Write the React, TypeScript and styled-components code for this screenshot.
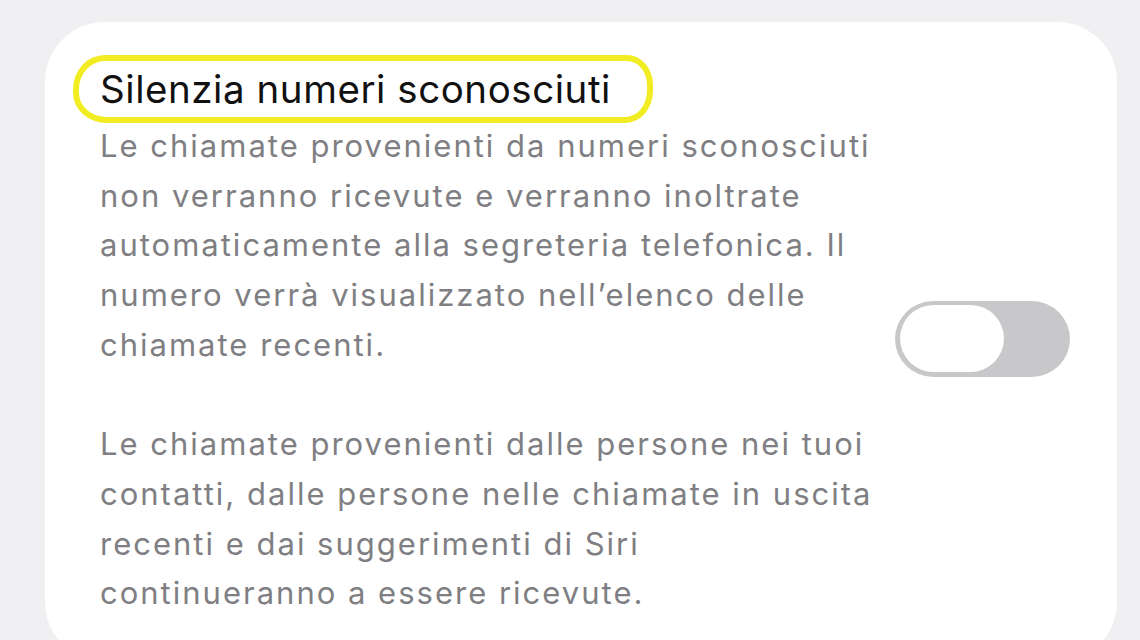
import styled, { createGlobalStyle } from "styled-components";

const GlobalStyle = createGlobalStyle`
  html, body {
    margin: 0;
    padding: 0;
    width: 1140px;
    height: 640px;
    overflow: hidden;
    background-color: #f0f0f2;
  }
`;

const StPage = styled.div`
  box-sizing: border-box;
  width: 1140px;
  height: 640px;
  padding: 22px 23px 0 45px;
  font-family: Inter, "Liberation Sans", sans-serif;
`;

const StCard = styled.div`
  box-sizing: border-box;
  display: flex;
  align-items: center;
  gap: 20px;
  width: 1072px;
  height: 640px;
  padding: 45px 47px 20px 55px;
  background-color: #ffffff;
  border-radius: 60px;
`;

const StTextColumn = styled.div`
  flex: 1;
  display: flex;
  flex-direction: column;
  align-self: flex-start;
`;

const StTitleRow = styled.div`
  display: flex;
`;

const StTitle = styled.h2`
  position: relative;
  margin: 0;
  font-size: 38.5px;
  font-weight: 400;
  line-height: 44px;
  letter-spacing: 0.55px;
  color: #111111;

  /* hand-drawn yellow highlight around the title */
  &::after {
    content: "";
    position: absolute;
    left: -27px;
    right: -42px;
    top: -12px;
    bottom: -12px;
    border: 6px solid #f2ec22;
    border-radius: 32px 26px 28px 34px / 34px 30px 32px 30px;
  }
`;

const StDescription = styled.p<{ $gap?: number }>`
  margin: ${({ $gap }) => $gap ?? 0}px 0 0;
  font-size: 31px;
  line-height: 49.7px;
  letter-spacing: 2px;
  color: #7f7f83;
  white-space: nowrap;
`;

const StToggle = styled.div<{ $on: boolean }>`
  flex-shrink: 0;
  box-sizing: border-box;
  display: flex;
  justify-content: ${({ $on }) => ($on ? "flex-end" : "flex-start")};
  align-items: center;
  width: 175px;
  height: 76px;
  margin-bottom: 32px;
  padding: 0 5px;
  border-radius: 38px;
  background-color: ${({ $on }) => ($on ? "#34c759" : "#c8c8ca")};
`;

const StKnob = styled.div`
  width: 104px;
  height: 67px;
  border-radius: 34px;
  background-color: #ffffff;
`;

const App = () => {
  return (
    <>
      <GlobalStyle />
      <StPage>
        <StCard>
          <StTextColumn>
            <StTitleRow>
              <StTitle>Silenzia numeri sconosciuti</StTitle>
            </StTitleRow>
            <StDescription $gap={10}>
              Le chiamate provenienti da numeri sconosciuti
              <br />
              non verranno ricevute e verranno inoltrate
              <br />
              automaticamente alla segreteria telefonica. Il
              <br />
              numero verrà visualizzato nell’elenco delle
              <br />
              chiamate recenti.
            </StDescription>
            <StDescription $gap={49.7}>
              Le chiamate provenienti dalle persone nei tuoi
              <br />
              contatti, dalle persone nelle chiamate in uscita
              <br />
              recenti e dai suggerimenti di Siri
              <br />
              continueranno a essere ricevute.
            </StDescription>
          </StTextColumn>
          <StToggle $on={false}>
            <StKnob />
          </StToggle>
        </StCard>
      </StPage>
    </>
  );
};

export default App;
